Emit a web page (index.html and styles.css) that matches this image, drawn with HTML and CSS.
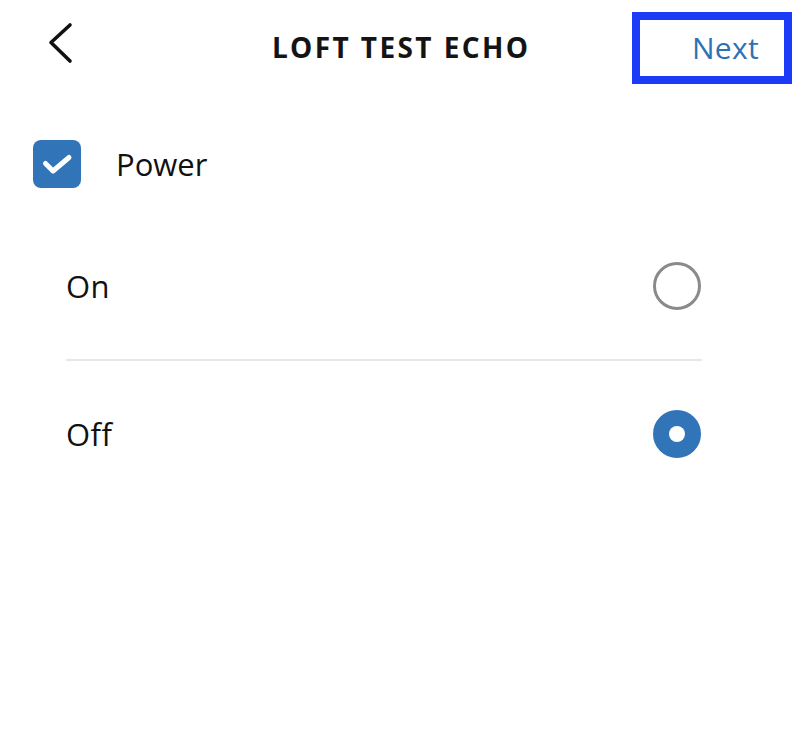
FILE: index.html
```html
<!DOCTYPE html>
<html lang="en">
<head>
<meta charset="utf-8">
<title>Loft Test Echo</title>
<link rel="stylesheet" href="styles.css">
</head>
<body>
<div class="screen">
  <header class="topbar">
    <button class="back" aria-label="Back">
      <svg width="30" height="44" viewBox="0 0 30 44" aria-hidden="true">
        <path d="M23 3 L4 20.5 L23 39" fill="none" stroke="#111" stroke-width="3.6" stroke-linecap="round" stroke-linejoin="round"/>
      </svg>
    </button>
    <h1 class="title">LOFT TEST ECHO</h1>
    <div class="next-wrap">
      <button class="next">Next</button>
    </div>
  </header>

  <label class="power">
    <span class="checkbox">
      <svg width="48" height="48" viewBox="0 0 48 48" aria-hidden="true">
        <rect x="0" y="0" width="48" height="48" rx="8" fill="#3274b8"/>
        <path d="M12.5 23.5 L20 31 L36 17.5" fill="none" stroke="#fff" stroke-width="5" stroke-linecap="round" stroke-linejoin="round"/>
      </svg>
    </span>
    <span class="power-label">Power</span>
  </label>

  <ul class="options">
    <li class="option">
      <span class="option-label">On</span>
      <span class="radio"></span>
    </li>
    <li class="divider"></li>
    <li class="option">
      <span class="option-label">Off</span>
      <span class="radio checked"></span>
    </li>
  </ul>
</div>
</body>
</html>
```

FILE: styles.css
```css
* {
  box-sizing: border-box;
}

html, body {
  margin: 0;
  padding: 0;
  background: #ffffff;
}

body {
  font-family: "Open Sans", "Noto Sans", "Liberation Sans", sans-serif;
  color: #111111;
}

.screen {
  width: 800px;
  height: 749px;
  background: #ffffff;
}

.topbar {
  display: grid;
  grid-template-columns: 1fr auto 1fr;
  align-items: center;
  padding-top: 12px;
  height: 84px;
}

.back {
  justify-self: start;
  margin-left: 47px;
  margin-top: -8px;
  padding: 0;
  border: 0;
  background: none;
  display: flex;
}

.title {
  margin: -3px 0 0;
  font-size: 28px;
  font-weight: 700;
  letter-spacing: 2.4px;
  padding-left: 2.4px;
  line-height: 1;
  color: #141414;
}

.next-wrap {
  justify-self: end;
  margin-right: 8px;
}

.next {
  display: flex;
  align-items: center;
  justify-content: flex-end;
  width: 160px;
  height: 72px;
  border: 8px solid #1c3bf6;
  background: #ffffff;
  padding: 0 25px 2px 0;
  font-family: "Open Sans", "Noto Sans", sans-serif;
  font-size: 30px;
  letter-spacing: 0.3px;
  color: #2b72b6;
}

.power {
  display: flex;
  align-items: center;
  gap: 35px;
  margin-top: 56px;
  padding-left: 33px;
  height: 48px;
}

.checkbox {
  display: flex;
  width: 48px;
  height: 48px;
}

.power-label {
  font-size: 31px;
  line-height: 1;
}

.options {
  list-style: none;
  margin: 25px 0 0 66px;
  padding: 0;
  width: 636px;
}

.option {
  display: flex;
  align-items: center;
  justify-content: space-between;
  height: 146px;
}

.option-label {
  font-size: 31px;
  line-height: 1;
  letter-spacing: 0.5px;
}

.divider {
  height: 2px;
  background: #e6e6e6;
}

.radio {
  width: 48px;
  height: 48px;
  border-radius: 50%;
  border: 3px solid #8a8a8a;
  margin-right: 1px;
  display: grid;
  place-items: center;
}

.radio.checked {
  border-color: #3274b8;
  background: #3274b8;
}

.radio.checked::after {
  content: "";
  width: 16px;
  height: 16px;
  border-radius: 50%;
  background: #ffffff;
}
```
